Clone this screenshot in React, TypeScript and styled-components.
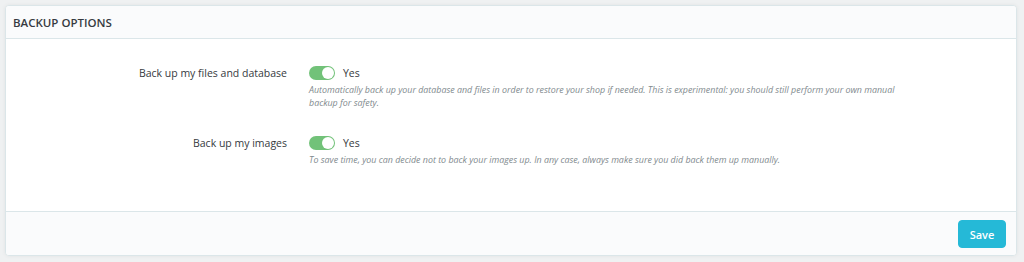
import React, { useState } from "react";
import styled, { createGlobalStyle } from "styled-components";

const GlobalStyle = createGlobalStyle`
  html, body {
    margin: 0;
    background: #eff1f2;
    font-family: "Open Sans", "Liberation Sans", sans-serif;
  }
`;

const Page = styled.div`
  padding: 5px 7px 6px 5px;
`;

const Card = styled.div`
  background: #fff;
  border: 1px solid #dbe6e9;
  border-radius: 4px;
  box-shadow: 0 0 4px 0 rgba(0, 0, 0, 0.06);
  overflow: hidden;
`;

const CardHeader = styled.div`
  height: 32px;
  padding: 0 7px;
  display: flex;
  align-items: center;
  background: #fafbfc;
  border-bottom: 1px solid #dbe6e9;
  color: #363a41;
  font-size: 11.5px;
  font-weight: 600;
  text-transform: uppercase;
`;

const CardBody = styled.div`
  padding: 24px 0 45px;
  display: flex;
  flex-direction: column;
  gap: 24px;
`;

const Row = styled.div`
  display: grid;
  grid-template-columns: 281px 600px;
  column-gap: 22px;
  align-items: start;
`;

const Label = styled.div`
  text-align: right;
  font-size: 10.5px;
  color: #363a41;
  line-height: 20px;
`;

const Control = styled.div`
  display: flex;
  flex-direction: column;
`;

const SwitchLine = styled.label`
  display: flex;
  align-items: center;
  gap: 8px;
  height: 20px;
  font-size: 10.5px;
  color: #363a41;
  cursor: pointer;
`;

const Track = styled.span<{ $on: boolean }>`
  position: relative;
  width: 26px;
  height: 14px;
  border-radius: 8px;
  background: ${(p) => (p.$on ? "#72c279" : "#bbcdd2")};
  display: inline-block;
`;

const Knob = styled.span<{ $on: boolean }>`
  position: absolute;
  top: 1px;
  left: ${(p) => (p.$on ? "13px" : "1px")};
  width: 12px;
  height: 12px;
  border-radius: 50%;
  background: #fff;
`;

const Help = styled.p`
  margin: 0;
  font-size: 8.9px;
  font-style: italic;
  color: #7f8a8e;
  line-height: 13px;
`;

const CardFooter = styled.div`
  display: flex;
  justify-content: flex-end;
  padding: 8px 10px 7px;
  background: #fafbfc;
  border-top: 1px solid #dbe6e9;
`;

const SaveButton = styled.button`
  background: #25b9d7;
  border: 1px solid #25b9d7;
  border-radius: 4px;
  color: #fff;
  font-family: inherit;
  font-weight: 600;
  font-size: 11px;
  height: 28px;
  width: 48px;
  padding: 0;
  cursor: pointer;
`;

const Switch: React.FC<{ on: boolean; onToggle: () => void }> = ({ on, onToggle }) => (
  <SwitchLine onClick={onToggle}>
    <Track $on={on}>
      <Knob $on={on} />
    </Track>
    {on ? "Yes" : "No"}
  </SwitchLine>
);

const options = [
  {
    label: "Back up my files and database",
    help: "Automatically back up your database and files in order to restore your shop if needed. This is experimental: you should still perform your own manual backup for safety.",
  },
  {
    label: "Back up my images",
    help: "To save time, you can decide not to back your images up. In any case, always make sure you did back them up manually.",
  },
];

export default function App() {
  const [values, setValues] = useState([true, true]);

  const toggle = (i: number) =>
    setValues((v) => v.map((x, j) => (j === i ? !x : x)));

  return (
    <Page>
      <GlobalStyle />
      <Card>
        <CardHeader>Backup options</CardHeader>
        <CardBody>
          {options.map((o, i) => (
            <Row key={o.label}>
              <Label>{o.label}</Label>
              <Control>
                <Switch on={values[i]} onToggle={() => toggle(i)} />
                <Help>{o.help}</Help>
              </Control>
            </Row>
          ))}
        </CardBody>
        <CardFooter>
          <SaveButton>Save</SaveButton>
        </CardFooter>
      </Card>
    </Page>
  );
}
